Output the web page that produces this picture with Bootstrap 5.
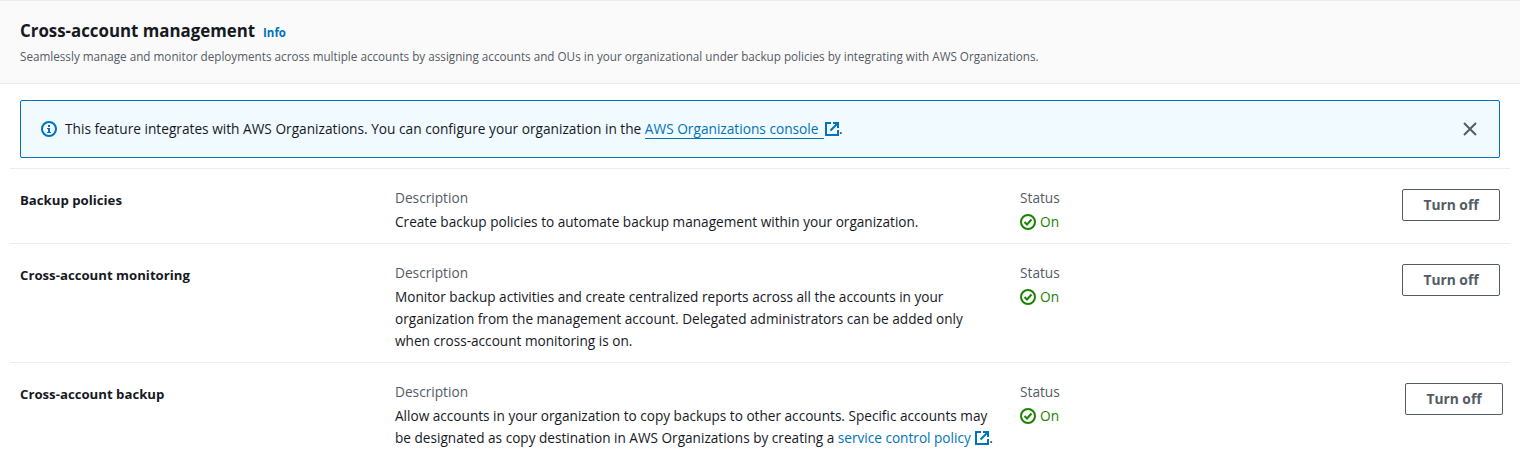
<!DOCTYPE html>
<html lang="en">
<head>
    <meta charset="UTF-8">
    <meta name="viewport" content="width=device-width, initial-scale=1.0">
    <title>Cross-account management</title>
    <link rel="stylesheet" href="https://cdn.jsdelivr.net/npm/bootstrap@5.3.0/dist/css/bootstrap.min.css">
    <style>
        body { font-family: "Open Sans", "Noto Sans", sans-serif; font-size: 13.7px; line-height: 22px; color: #16191f; overflow: hidden; }
        a { color: #0073bb; text-decoration: none; }
        .page-head { background: #fafafa; border-top: 1px solid #eaeded; border-bottom: 1px solid #eaeded; height: 84px; padding: 17px 20px 0; }
        .page-head h1 { font-size: 16.85px; line-height: 26px; font-weight: 700; margin: 0; }
        .info-link { font-size: 11.5px; font-weight: 700; line-height: 26px; }
        .page-head p { font-size: 11.7px; line-height: 16px; color: #545b64; margin: 2px 0 0; }
        .notice { background: #f1faff; border: 1px solid #0073bb; border-radius: 2px; height: 58px; margin: 16px 20px 10px; padding: 0 21px 0 20px; }
        .notice-link { border-bottom: 1px solid #0073bb; padding-right: 2px; }
        .close-x { background: none; border: 0; padding: 0; line-height: 0; color: #545b64; }
        .feature-list { padding: 0 20px; }
        .feature-row { --bs-gutter-x: 20px; border-top: 1px solid #eaeded; padding-top: 18px; padding-bottom: 10px; }
        .feature-row h2 { font-size: 13.2px; line-height: 22px; font-weight: 700; margin: 2px 0 0; }
        .field-label { color: #545b64; line-height: 22px; margin-bottom: 2px; }
        .field-text { font-size: 13.62px; line-height: 22px; }
        .status-on { color: #1d8102; line-height: 22px; }
        .btn-turn { --bs-btn-color: #545b64; --bs-btn-border-color: #545b64; --bs-btn-hover-color: #16191f; --bs-btn-hover-bg: #fafafa; --bs-btn-hover-border-color: #16191f; --bs-btn-border-radius: 2px; --bs-btn-font-size: 13.8px; --bs-btn-font-weight: 700; --bs-btn-line-height: 20px; --bs-btn-padding-y: 5px; width: 98px; margin-top: 2px; }
        .btn-nudge { margin-right: -3px; }
        .ext-icon { vertical-align: -2px; margin-left: 1px; }
    </style>
</head>
<body>

    <!-- Header -->
    <div class="page-head">
        <div class="d-flex align-items-baseline gap-2">
            <h1>Cross-account management</h1>
            <a class="info-link" href="#">Info</a>
        </div>
        <p>Seamlessly manage and monitor deployments across multiple accounts by assigning accounts and OUs in your organizational under backup policies by integrating with AWS Organizations.</p>
    </div>

    <!-- Notice -->
    <div class="notice d-flex align-items-center">
        <svg class="flex-shrink-0 me-2" width="16" height="16" viewBox="0 0 16 16" fill="none">
            <circle cx="8" cy="8" r="7" stroke="#0073bb" stroke-width="2"/>
            <rect x="7" y="7" width="2" height="5" fill="#0073bb"/>
            <rect x="7" y="4" width="2" height="2" fill="#0073bb"/>
            <path d="M6 7.5h2M6 11.5h4" stroke="#0073bb" stroke-width="1"/>
        </svg>
        <span class="flex-grow-1">This feature integrates with AWS Organizations. You can configure your organization in the <a href="#"><span class="notice-link">AWS Organizations console </span><svg class="ext-icon" width="14" height="14" viewBox="0 0 14 14" fill="none" stroke="#0073bb" stroke-width="2"><path d="M6 1H1v12h12V8"/><path d="M8 1h5v5M13 1 5.5 8.5"/></svg></a>.</span>
        <button class="close-x" type="button" aria-label="Close">
            <svg width="16" height="16" viewBox="0 0 16 16" fill="none" stroke="currentColor" stroke-width="2"><path d="m2 2 12 12M14 2 2 14"/></svg>
        </button>
    </div>

    <!-- Features -->
    <div class="feature-list">
        <div class="row feature-row">
            <div class="col-3"><h2>Backup policies</h2></div>
            <div class="col-5">
                <div class="field-label">Description</div>
                <div class="field-text">Create backup policies to automate backup management within your organization.</div>
            </div>
            <div class="col-4 d-flex justify-content-between align-items-start">
                <div>
                    <div class="field-label">Status</div>
                    <div class="status-on d-flex align-items-center gap-1">
                        <svg width="16" height="16" viewBox="0 0 16 16" fill="none" stroke="#1d8102" stroke-width="2"><circle cx="8" cy="8" r="7"/><path d="m4.5 8 2.5 2.5 4.5-5"/></svg>On
                    </div>
                </div>
                <button class="btn btn-turn" type="button">Turn off</button>
            </div>
        </div>
        <div class="row feature-row">
            <div class="col-3"><h2>Cross-account monitoring</h2></div>
            <div class="col-5">
                <div class="field-label">Description</div>
                <div class="field-text">Monitor backup activities and create centralized reports across all the accounts in your organization from the management account. Delegated administrators can be added only when cross-account monitoring is on.</div>
            </div>
            <div class="col-4 d-flex justify-content-between align-items-start">
                <div>
                    <div class="field-label">Status</div>
                    <div class="status-on d-flex align-items-center gap-1">
                        <svg width="16" height="16" viewBox="0 0 16 16" fill="none" stroke="#1d8102" stroke-width="2"><circle cx="8" cy="8" r="7"/><path d="m4.5 8 2.5 2.5 4.5-5"/></svg>On
                    </div>
                </div>
                <button class="btn btn-turn" type="button">Turn off</button>
            </div>
        </div>
        <div class="row feature-row">
            <div class="col-3"><h2>Cross-account backup</h2></div>
            <div class="col-5">
                <div class="field-label">Description</div>
                <div class="field-text">Allow accounts in your organization to copy backups to other accounts. Specific accounts may be designated as copy destination in AWS Organizations by creating a <a href="#">service control policy <svg class="ext-icon" width="14" height="14" viewBox="0 0 14 14" fill="none" stroke="#0073bb" stroke-width="2"><path d="M6 1H1v12h12V8"/><path d="M8 1h5v5M13 1 5.5 8.5"/></svg></a>.</div>
            </div>
            <div class="col-4 d-flex justify-content-between align-items-start">
                <div>
                    <div class="field-label">Status</div>
                    <div class="status-on d-flex align-items-center gap-1">
                        <svg width="16" height="16" viewBox="0 0 16 16" fill="none" stroke="#1d8102" stroke-width="2"><circle cx="8" cy="8" r="7"/><path d="m4.5 8 2.5 2.5 4.5-5"/></svg>On
                    </div>
                </div>
                <button class="btn btn-turn btn-nudge" type="button">Turn off</button>
            </div>
        </div>
    </div>

    <script src="https://cdn.jsdelivr.net/npm/bootstrap@5.3.0/dist/js/bootstrap.bundle.min.js"></script>
</body>
</html>
